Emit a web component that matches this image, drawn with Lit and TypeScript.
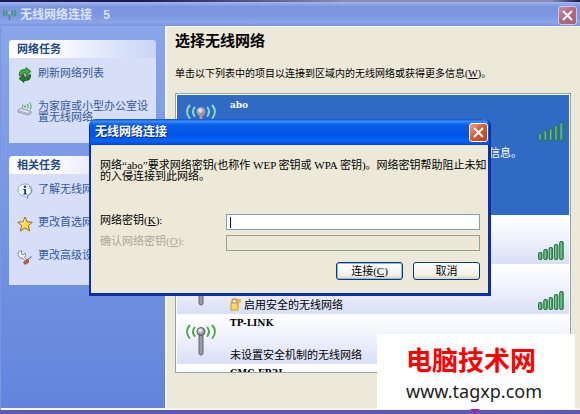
import { LitElement, html, svg, css } from "lit";
import { customElement, property } from "lit/decorators.js";

type Network = { name: string; security?: string; secured?: boolean; note?: string; selected?: boolean };

const networks: Network[] = [
  { name: "abo", note: "此网络需要网络密钥。单击“连接”可获得其他信息。", selected: true },
  { name: "TP-LINK_1", security: "启用安全的无线网络", secured: true },
  { name: "TP-LINK_2", security: "启用安全的无线网络", secured: true },
  { name: "TP-LINK", security: "未设置安全机制的无线网络" },
  { name: "CMC-FR2J" },
];

const waves = (color: string) => svg`
  <g fill="none" stroke=${color} stroke-width="2" stroke-linecap="round">
    <path d="M9.500 4.500Q6.500 8.500 9.500 13"/><path d="M4.500 2.500Q-.5 8.500 4.500 15"/>
    <path d="M22.500 4.500Q25.500 8.500 22.500 13"/><path d="M27.500 2.500Q32.500 8.500 27.500 15"/>
  </g>`;

@customElement("antenna-icon")
export class AntennaIcon extends LitElement {
  @property({ type: Boolean }) selected = false;
  static styles = css`
    :host { display: block; }
    svg { display: block; width: 32px; height: 34px; overflow: visible; }
  `;
  render() {
    return html`<svg viewBox="0 0 32 34" aria-hidden="true">
      <defs><radialGradient id="b" cx=".4" cy=".35"><stop offset="0" stop-color="#fff"/><stop offset="1" stop-color="#8a8a94"/></radialGradient></defs>
      ${this.selected ? waves("#8fd9c0") : waves("#4fa84f")}
      <rect x="14" y="10" width="4" height="22" rx="2" fill="#9a9aa2" stroke="#62626c"/>
      <circle cx="16" cy="8.500" r="4" fill="url(#b)" stroke=${this.selected ? "#a9a4c0" : "#5c5c66"}/>
    </svg>`;
  }
}

@customElement("signal-bars")
export class SignalBars extends LitElement {
  static styles = css`
    :host { display: block; }
    svg { display: block; width: 26px; height: 19px; }
  `;
  render() {
    const heights = [7, 10, 12, 15, 18];
    return html`<svg viewBox="0 0 26 19" role="img" aria-label="信号强度">
      ${heights.map((h, i) => svg`
        <rect x=${i * 5.3 + 0.5} y=${18.5 - h} width="3.500" height=${h} rx="1" fill="#3f9d5c" stroke="#2d7046"/>
        <rect x=${i * 5.3 + 1.4} y=${19.5 - h} width="1" height=${h - 2} fill="#8fd6a0"/>`)}
    </svg>`;
  }
}

@customElement("close-button")
export class CloseButton extends LitElement {
  @property({ type: Boolean, reflect: true }) inactive = false;
  static styles = css`
    :host { display: block; }
    button {
      display: grid; place-items: center; width: 19px; height: 19px; padding: 0;
      border: 1px solid #fff; border-radius: 3px;
      background: linear-gradient(135deg, #f0a488, #d95b38 45%, #c03a18);
    }
    :host([inactive]) button { border-color: #c3cdf2; background: linear-gradient(135deg, #c58fa0, #b36878 50%, #a85f72); }
    svg { display: block; width: 11px; height: 11px; }
  `;
  render() {
    return html`<button type="button" aria-label="关闭"><svg viewBox="0 0 11 11"><path d="M1 1L10 10M10 1L1 10" stroke="#fff" stroke-width="2"/></svg></button>`;
  }
}

const icons = {
  refresh: svg`<path d="M2.500 9V6Q3 2.500 7 2.500H9V.5L14 4.500 9 8.500V6H7Q5.500 6 5.500 8Z" fill="#3fae42" stroke="#15641c" stroke-width=".8"/><path d="M13.500 7.500V10Q13 13.500 9 13.500H7V15.500L2 11.500 7 7.500V10H9Q10.500 10 10.500 8.500Z" fill="#237f2b" stroke="#0f5217" stroke-width=".8"/>`,
  setup: svg`<path d="M1 10L4 8.500 14 11.500V13.500L11 15 1 12Z" fill="#e4e7ee" stroke="#7d8599" stroke-width=".8"/><path d="M2 11L11 13.500 14 12" fill="none" stroke="#8d95a8" stroke-width=".8"/><circle cx="8" cy="6.500" r="1" fill="#5aa35a"/><path d="M6 4.500Q5 6 6 8M10 4Q12 6 10.500 8.500M12.500 2.500Q15.500 6 13 9.500" fill="none" stroke="#62ad5e" stroke-width="1.100"/>`,
  info: svg`<path d="M8 1C12 1 15 3.500 15 7S12.500 12 10.500 12.500L10.500 15.500 7.500 13C4 13 1 10.500 1 7S4 1 8 1Z" fill="#f4f8ff" stroke="#8fa3cc"/><path d="M12 3C15.500 5.500 15 11 10.500 12.500V15" fill="none" stroke="#6985bd"/><circle cx="8" cy="3.700" r="1.200" fill="#1c3a80"/><path d="M6.300 6H9V10.500H10V11.500H6.300V10.500H7.200V7H6.300Z" fill="#1c3a80"/>`,
  star: svg`<path d="M8 1L10 5.800 15.300 6.200 11.300 9.700 12.700 15 8 12 3.300 15 4.700 9.700 .7 6.200 6 5.800Z" fill="#ffd94a" stroke="#8f741e"/><path d="M8 3.500L7 7 3.500 7.300" fill="none" stroke="#fff6b8"/>`,
  tools: svg`<path d="M1 4Q2 1 5 2L4 4.500 6 6 8 4Q9.500 7 7.500 8.500L12 13 10.500 14.500 6 9.500Q1 9.500 1 4Z" fill="#f5f6fa" stroke="#767c8e" stroke-width=".9"/><path d="M14.500 7.500L9.500 12" stroke="#8a8f9c" stroke-width="1.500"/><path d="M10.500 10.500L6.500 13.500 8 15.500 12 12Z" fill="#d85a48" stroke="#93352a" stroke-width=".8"/>`,
};

@customElement("task-card")
export class TaskCard extends LitElement {
  @property() heading = "";
  @property({ attribute: false }) items: { icon: keyof typeof icons; label: string }[] = [];
  static styles = css`
    :host { display: block; background: #d6dff7; border-radius: 4px 4px 0 0; }
    h2 {
      margin: 0; height: 18px; padding-left: 8px; border-radius: 4px 4px 0 0;
      font-size: 11px; line-height: 18px; color: #1f4a8a;
      background: linear-gradient(90deg, #fff 25%, #c8d4f7);
    }
    nav { display: grid; gap: 17px; padding: 9px 8px 20px; }
    a { display: grid; grid-template-columns: 16px 1fr; gap: 5px; color: #34599c; text-decoration: none; line-height: 11px; font-size: 11px; }
    a span { padding-top: 1px; }
    svg { display: block; width: 16px; height: 16px; }
  `;
  render() {
    return html`<h2>${this.heading}</h2>
      <nav>${this.items.map((i) => html`<a href="#"><svg viewBox="0 0 16 16" aria-hidden="true">${icons[i.icon]}</svg><span>${i.label}</span></a>`)}</nav>`;
  }
}

@customElement("network-row")
export class NetworkRow extends LitElement {
  @property({ attribute: false }) network!: Network;
  @property({ type: Boolean, reflect: true }) selected = false;
  static styles = css`
    :host {
      display: grid; grid-template-columns: 32px 1fr auto; column-gap: 13px; align-items: center;
      box-sizing: border-box; height: 49px; padding: 0 5px 0 8px;
      background: linear-gradient(#fff, #f2f4fd 40%, #d8dff6);
    }
    :host([selected]) { height: 120px; background: #316ac5; color: #fff; align-items: start; padding-top: 5px; }
    .text { display: flex; flex-direction: column; justify-content: space-between; height: 43px; }
    strong { font: bold 9px/10px "DejaVu Serif", serif; }
    .line { display: flex; gap: 3px; align-items: center; font-size: 11px; line-height: 12px; white-space: nowrap; }
    .key { width: 11px; height: 13px; }
    .text.open { height: auto; gap: 37px; }
    .open .line { justify-content: flex-end; padding-right: 3px; }
    signal-bars { margin-top: 21px; }
    :host([selected]) signal-bars { margin-top: 22px; opacity: .75; }
    :host([selected]) antenna-icon { margin-top: 3px; }
  `;
  render() {
    const n = this.network;
    return html`<antenna-icon ?selected=${this.selected}></antenna-icon>
      <div class="text ${n.selected ? "open" : ""}">
        <strong>${n.name}</strong>
        <span class="line">
          ${n.secured ? html`<svg class="key" viewBox="0 0 11 13" aria-hidden="true"><path d="M2 6V3Q2 1 4.500 1T7 3V5" fill="none" stroke="#c9982c" stroke-width="1.500"/><rect x="1" y="5" width="7" height="7" fill="#ffd75e" stroke="#c9982c"/><path d="M7 2H10V4H8V9" fill="none" stroke="#e0ac38" stroke-width="1.500"/></svg>` : ""}
          ${n.security ?? n.note ?? ""}
        </span>
      </div>
      <signal-bars></signal-bars>`;
  }
}

@customElement("key-dialog")
export class KeyDialog extends LitElement {
  static styles = css`
    :host {
      display: block; box-sizing: border-box; border: solid #0a2fa8; border-width: 0 3px 3px 2px;
      border-radius: 7px 7px 0 0; background: #ece9d8; color: #000; font-size: 11px;
    }
    header {
      display: flex; align-items: center; justify-content: space-between; height: 26px; padding: 0 1px 0 5px;
      margin: 0 -1px; border-radius: 6px 6px 0 0; color: #fff; text-shadow: 1px 1px #0a2a80;
      background: linear-gradient(#0a4fd0, #3a8cff 9%, #0a5ee8 22%, #0054e3 60%, #0862fb 85%, #0047cc);
    }
    h2 { margin: 0; font-size: 12px; line-height: 16px; }
    form { padding: 15px 8px 13px 9px; }
    p { margin: 0 -8px 0 0; line-height: 11px; white-space: nowrap; }
    .fields { display: grid; grid-template-columns: 120px 1fr; gap: 5px 6px; margin-top: 32px; line-height: 12px; }
    .off { color: #aca899; }
    input { box-sizing: border-box; width: 100%; height: 16px; padding: 0 3px; border: 1px solid #7f9db9; border-radius: 0; background: #fff; font: inherit; outline: none; }
    #key { background: linear-gradient(#000, #000) 3px center / 1px 11px no-repeat #fff; }
    input:disabled { border-color: #98a09c; background: #ebe8d8; }
    .actions { display: flex; justify-content: flex-end; gap: 10px; margin-top: 11px; }
    .actions button {
      width: 67px; height: 18px; padding: 0; border: 1px solid #003c74; border-radius: 3px; color: #000;
      background: linear-gradient(#fff, #f1f0e8 75%, #d8d2c4); font: inherit; line-height: 14px;
    }
    .actions .primary { box-shadow: inset 0 0 0 1px #98b8ea; }
  `;
  render() {
    return html`<header><h2>无线网络连接</h2><close-button></close-button></header>
      <form>
        <p>网络“abo”要求网络密钥(也称作 WEP 密钥或 WPA 密钥)。网络密钥帮助阻止未知<br>的入侵连接到此网络。</p>
        <div class="fields">
          <label for="key">网络密钥(<u>K</u>):</label><input id="key" type="text">
          <label class="off" for="again">确认网络密钥(<u>O</u>):</label><input id="again" type="text" disabled>
        </div>
        <div class="actions"><button class="primary" type="button">连接(<u>C</u>)</button><button type="button">取消</button></div>
      </form>`;
  }
}

@customElement("app-root")
export class AppRoot extends LitElement {
  static styles = css`
    :host {
      display: grid; grid-template-rows: 2px 1fr 4px; position: relative; box-sizing: border-box; height: 100vh; overflow: hidden;
      font-family: "Liberation Serif", "Noto Sans CJK SC", sans-serif; color: #000;
    }
    .desk { background: linear-gradient(90deg, #1d1b52 25%, #8a8fb0 60%, #8a8fb0 95%, #151550); }
    .base { background: #5a5aae; }
    .window { display: grid; grid-template-rows: 24px 1fr; min-height: 0; border-radius: 5px 5px 0 0; background: #7b96e0; }
    .bar {
      display: flex; align-items: center; gap: 3px; padding: 2px 3px 0 2px; color: #dbe4fb;
      background: linear-gradient(#a2b5ee, #7a94df 20%, #7c96e0 55%, #8aa5ea 85%, #7b92dd);
    }
    .bar svg { width: 15px; height: 15px; }
    .bar h1 { flex: 1; margin: 0; font-size: 12px; line-height: 16px; }
    .bar h1 span { margin-left: 11px; font-family: "Liberation Mono", monospace; }
    .body { display: grid; grid-template-columns: 164px 1fr; min-height: 0; margin-left: 1px; border-bottom: 2px solid #f4f6ff; }
    aside { display: grid; align-content: start; gap: 13px; padding: 14px 9px 0 8px; background: linear-gradient(#8aa6ea, #6284dc); }
    main { display: flex; flex-direction: column; min-height: 0; padding: 5px 9px 35px 8px; border-left: 2px solid #f4f6ff; border-top: 1px solid #f4f6ff; background: #ece9d8; }
    main h2 { margin: 0; font-size: 15px; line-height: 18px; }
    main p { margin: 17px 0 12px; font-size: 10px; line-height: 14px; }
    .list { flex: 1; min-height: 0; overflow: hidden; padding: 1px; border: 1px solid #91a7b4; background: #fff; }
    network-row + network-row { margin-bottom: 1px; }
    key-dialog { position: absolute; left: 89px; top: 119px; width: 402px; }
    .mark {
      position: absolute; right: 5px; bottom: 5px; box-sizing: border-box; width: 198px; height: 75px; padding: 9px 0 0 29px;
      background: #fff; color: #1c1c1c; font: 18px/32px "Noto Sans", sans-serif;
    }
    .mark b { display: block; color: #f00; font: bold 26px/32px "Noto Sans CJK SC", sans-serif; }
    .pin { position: absolute; right: 100px; bottom: 1px; width: 10px; height: 4px; background: #c0168e; clip-path: polygon(0 0, 100% 0, 50% 100%); }
  `;
  render() {
    return html`
      <div class="desk"></div>
      <div class="window">
        <header class="bar">
          <svg viewBox="0 0 16 16" aria-hidden="true"><g fill="none" stroke="#2f9c62" stroke-width="1.400"><path d="M3 2Q0 5 3 9M5.500 3Q4 5 5.500 8M13 2Q16 5 13 9M10.500 3Q12 5 10.500 8"/></g><path d="M8 6V13" stroke="#68718a" stroke-width="1.500"/><circle cx="8" cy="5" r="1.800" fill="#a8b0c0"/></svg>
          <h1>无线网络连接<span>5</span></h1>
          <close-button inactive></close-button>
        </header>
        <div class="body">
          <aside>
            <task-card heading="网络任务" .items=${[
              { icon: "refresh", label: "刷新网络列表" },
              { icon: "setup", label: "为家庭或小型办公室设置无线网络" },
            ]}></task-card>
            <task-card heading="相关任务" .items=${[
              { icon: "info", label: "了解无线网络安全" },
              { icon: "star", label: "更改首选网络顺序" },
              { icon: "tools", label: "更改高级设置" },
            ]}></task-card>
          </aside>
          <main>
            <h2>选择无线网络</h2>
            <p>单击以下列表中的项目以连接到区域内的无线网络或获得更多信息(<u>W</u>)。</p>
            <div class="list">${networks.map((n) => html`<network-row .network=${n} ?selected=${!!n.selected}></network-row>`)}</div>
          </main>
        </div>
      </div>
      <div class="base"></div>
      <key-dialog></key-dialog>
      <div class="mark"><b>电脑技术网</b>www.tagxp.com</div>
      <div class="pin"></div>
    `;
  }
}
